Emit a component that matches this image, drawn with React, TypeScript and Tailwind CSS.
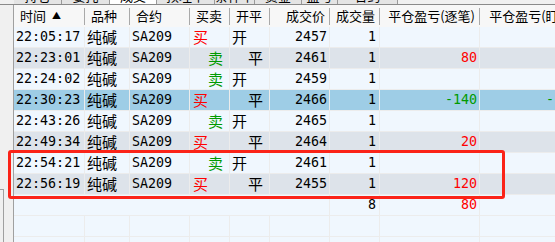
import React from "react";

type Fill = {
  time: string;
  side: "买" | "卖";
  oc: "开" | "平";
  price: number;
  qty: number;
  pnl: string;
  selected?: boolean;
};

const fills: Fill[] = [
  { time: "22:05:17", side: "买", oc: "开", price: 2457, qty: 1, pnl: "" },
  { time: "22:23:01", side: "卖", oc: "平", price: 2461, qty: 1, pnl: "80" },
  { time: "22:24:02", side: "卖", oc: "开", price: 2459, qty: 1, pnl: "" },
  { time: "22:30:23", side: "买", oc: "平", price: 2466, qty: 1, pnl: "-140", selected: true },
  { time: "22:43:26", side: "卖", oc: "开", price: 2465, qty: 1, pnl: "" },
  { time: "22:49:34", side: "买", oc: "平", price: 2464, qty: 1, pnl: "20" },
  { time: "22:54:21", side: "卖", oc: "开", price: 2461, qty: 1, pnl: "" },
  { time: "22:56:19", side: "买", oc: "平", price: 2455, qty: 1, pnl: "120" },
];

const tabs = [
  { label: "持仓", w: "w-[48px]" },
  { label: "委托", w: "w-[48px]" },
  { label: "成交", w: "w-[47px]", active: true },
  { label: "预埋单", w: "w-[58px]" },
  { label: "条件单", w: "w-[40px]" },
  { label: "资金", w: "w-[47px]" },
  { label: "盈亏", w: "w-[36px]" },
  { label: "合约", w: "w-[60px]" },
];

const mono = "font-['DejaVu_Sans_Mono',monospace] text-[13.33px]";
const cjk = "font-['Noto_Sans_CJK_SC',sans-serif] text-[15px]";

function pnlColor(v: string) {
  return v.startsWith("-") ? "text-[#009a00]" : "text-[#ff0000]";
}

function HeaderCell({ w, label, right }: { w: string; label: React.ReactNode; right?: boolean }) {
  return (
    <div
      className={`${w} h-[17px] shrink-0 border-r border-[#a9a9a9] flex items-center whitespace-nowrap overflow-hidden ${
        right ? "justify-end pr-[4px]" : "pl-[6px]"
      }`}
    >
      {label}
    </div>
  );
}

function Row({ fill, bg }: { fill?: Fill; bg: string }) {
  const cell = "h-full shrink-0 border-r border-[#ececec] flex items-center whitespace-nowrap overflow-hidden";
  return (
    <div className={`flex h-[21px] border-b border-[#ececec] ${bg}`}>
      <div className={`${cell} w-[71px] pl-[2px] ${mono}`}>{fill?.time}</div>
      <div className={`${cell} w-[45px] pl-[2px] ${cjk}`}>{fill ? "纯碱" : ""}</div>
      <div className={`${cell} w-[60px] pl-[2px] ${mono}`}>{fill ? "SA209" : ""}</div>
      <div
        className={`${cell} w-[40px] ${cjk} ${
          fill?.side === "买" ? "pl-[3px] text-[#ff0000]" : "pl-[18px] text-[#009a00]"
        }`}
      >
        {fill?.side}
      </div>
      <div className={`${cell} w-[40px] ${cjk} ${fill?.oc === "开" ? "pl-[2px]" : "pl-[18px]"}`}>{fill?.oc}</div>
      <div className={`${cell} w-[60px] justify-end pr-[2px] ${mono}`}>{fill?.price}</div>
      <div className={`${cell} w-[50px] justify-end pr-[3px] ${mono}`}>{fill?.qty}</div>
      <div className={`${cell} w-[100px] justify-end pr-[2px] ${mono} ${fill ? pnlColor(fill.pnl) : ""}`}>{fill?.pnl}</div>
      <div className={`${cell} w-[101px] justify-end pr-[2px] ${mono} ${fill ? pnlColor(fill.pnl) : ""}`}>{fill?.pnl}</div>
    </div>
  );
}

export default function App() {
  return (
    <div className="relative w-[555px] h-[242px] overflow-hidden bg-[#f0f0f0] text-black">
      {/* tab strip, mostly scrolled off the top */}
      <div className="flex h-[5px] border-b border-[#8a8a8a] pl-[14px] overflow-hidden">
        {tabs.map((t) => (
          <div
            key={t.label}
            className={`${t.w} shrink-0 h-[5px] border-r border-[#9a9a9a] flex justify-center overflow-hidden ${
              t.active ? "bg-white" : "bg-[#e4e4e4]"
            }`}
          >
            <span className="-mt-[12px] text-[13px] leading-[16px] font-['Noto_Sans_CJK_SC',sans-serif]">{t.label}</span>
          </div>
        ))}
      </div>

      <div className="flex">
        {/* left gutter */}
        <div className="w-[14px] shrink-0 border-r border-[#a0a0a0] flex flex-col">
          <div className="h-[184px]" />
          <div className="w-[4px] h-[60px] border-t border-r border-[#a0a0a0]" />
        </div>

        <div className="flex flex-col bg-[#f0f7fe]">
          <div className="flex h-[22px] items-center bg-[#f7f7f7] font-['Noto_Sans_CJK_SC',sans-serif] text-[13px]">
            <HeaderCell
              w="w-[71px]"
              label={
                <>
                  时间<span className="ml-[6px] text-[9px]">▲</span>
                </>
              }
            />
            <HeaderCell w="w-[45px]" label="品种" />
            <HeaderCell w="w-[60px]" label="合约" />
            <HeaderCell w="w-[40px]" label="买卖" />
            <HeaderCell w="w-[40px]" label="开平" />
            <HeaderCell w="w-[60px]" label="成交价" right />
            <HeaderCell w="w-[50px]" label="成交量" right />
            <HeaderCell w="w-[100px]" label="平仓盈亏(逐笔)" right />
            <HeaderCell w="w-[101px]" label="平仓盈亏(盯市)" right />
          </div>

          {fills.map((f, i) => (
            <Row
              key={f.time}
              fill={f}
              bg={f.selected ? "bg-[#9ecde6]" : i % 2 === 0 ? "bg-[#f0f7fe]" : "bg-[#dde3ea]"}
            />
          ))}

          {/* totals */}
          <div className="flex h-[21px] border-b border-[#ececec] bg-[#f0f7fe]">
            <div className="w-[316px] shrink-0 h-full border-r border-[#ececec]" />
            <div className={`w-[50px] shrink-0 h-full border-r border-[#ececec] flex items-center justify-end pr-[3px] ${mono}`}>8</div>
            <div className={`w-[100px] shrink-0 h-full border-r border-[#ececec] flex items-center justify-end pr-[2px] text-[#ff0000] ${mono}`}>80</div>
            <div className={`w-[101px] shrink-0 h-full flex items-center justify-end pr-[2px] text-[#ff0000] ${mono}`}>80</div>
          </div>

          <Row bg="bg-[#f0f7fe]" />
          <Row bg="bg-[#f0f7fe]" />
        </div>
      </div>

      {/* highlight box drawn over the last two fills */}
      <div className="absolute left-[8px] top-[150px] w-[497px] h-[49px] border-[3px] border-[#fb2318] rounded-[3px] pointer-events-none" />
    </div>
  );
}
